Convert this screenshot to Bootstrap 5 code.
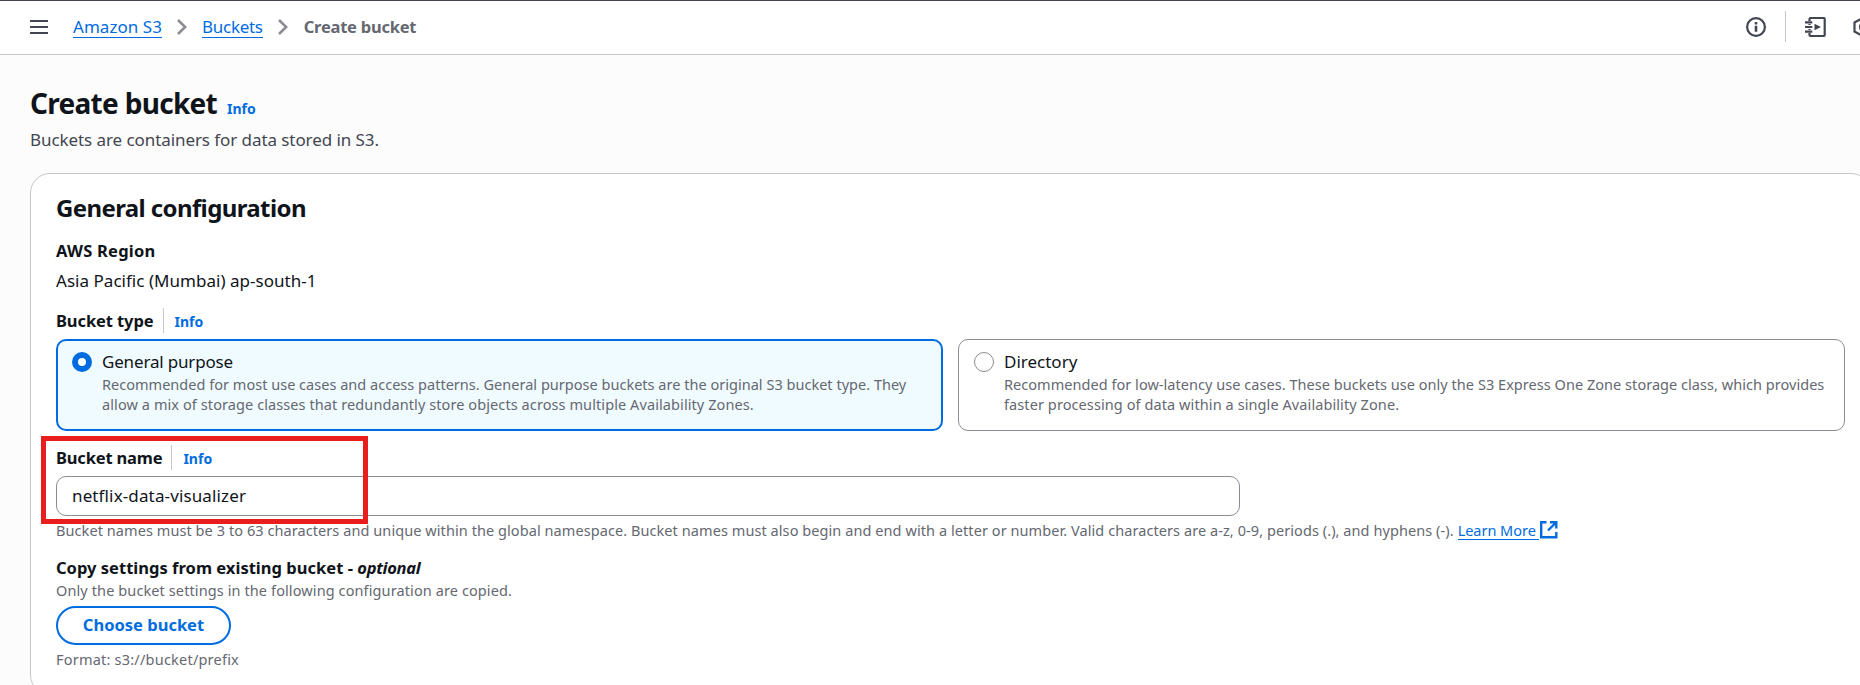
<!DOCTYPE html>
<html lang="en">
<head>
<meta charset="utf-8">
<meta name="viewport" content="width=device-width, initial-scale=1">
<title>Create bucket</title>
<link href="https://cdn.jsdelivr.net/npm/bootstrap@5.3.0/dist/css/bootstrap.min.css" rel="stylesheet">
<style>
:root{--blue:#006ce0;--ink:#0f141a;--muted-ink:#656871;--line:#c6c6cd;--ctl:#8c8c94;--icon:#424650}
body{font-family:"Noto Sans","Open Sans",sans-serif;font-size:17px;line-height:25px;color:var(--ink);background:#fcfcfd;height:685px;overflow:hidden;white-space:nowrap}
a{color:var(--blue);text-decoration:none}
svg{display:block;flex:none}
.topbar{height:55px;border-top:1px solid var(--icon);border-bottom:1px solid var(--line);background:#fff;padding:0 0 2px 30px}
.menu-btn{margin-right:25px}
.crumb-link{line-height:21px;border-bottom:1px solid var(--blue)}
.crumb-s3{letter-spacing:.05px}
.crumb-buckets{letter-spacing:-.28px}
.crumb-here{color:var(--muted-ink);font-size:16.5px;font-weight:700;letter-spacing:-.24px;margin-left:1px}
.chev{margin:0 15px}
.tools{width:114px}
.tools .rule{flex:none;width:1px;height:31px;background:var(--line);margin:0 19px}
.hex-btn{margin-left:27px}
.page{padding:29px 0 0 30px;width:1871px}
.page-title{font-size:28px;line-height:38px;font-weight:700;letter-spacing:-.7px;margin:0 10px 0 0}
.title-row{height:38px}
.info-link{font-size:14px;font-weight:700}
.intro{margin:5px 0 21px;color:#424650;letter-spacing:-.075px}
.panel{background:#fff;border:1px solid var(--line);border-radius:20px;padding:19px 25px 25px;height:522px}
.panel-title{font-size:24px;line-height:30px;font-weight:700;letter-spacing:-.61px;margin:0 0 15px}
.field-label{font-size:16.5px;font-weight:700}
.region-value{margin:5px 0 15px;letter-spacing:.03px}
.label-row{height:25px}
.ls-region{letter-spacing:.23px}
.ls-type{letter-spacing:-.1px}
.ls-name{letter-spacing:-.17px}
.ls-copy{letter-spacing:.02px;margin-top:15px}
.ls-copy em{letter-spacing:-.3px}
.v-rule{width:1px;height:25px;background:var(--line);margin:0 11px 0 9px;align-self:center}
.tiles{--bs-gutter-x:15px;margin-top:6px}
.tile{height:92px;border:1px solid var(--ctl);border-radius:10px;padding:9px 15px}
.tile.chosen{border:2px solid var(--blue);background:#f0fbff;padding:8px 14px}
.dot{width:20px;height:20px;border-radius:50%;border:1px solid var(--ctl);background:#fff;margin:3px 10px 0 0;flex:none}
.chosen .dot{border:6px solid var(--blue)}
.chosen .tile-name{letter-spacing:-.17px}
.hint{font-size:14.5px;line-height:20px;color:var(--muted-ink);letter-spacing:.073px}
.tile .hint{letter-spacing:.04px}
.chosen .hint{letter-spacing:.02px}
.tile .hint span{letter-spacing:.09px}
.ls-only{letter-spacing:.106px}
.ls-format{letter-spacing:.216px}
.name-group{margin-top:14px}
.name-input{width:1184px;height:40px;border:1px solid var(--ctl);border-radius:10px;padding:0 15px 2px;font-size:17px;letter-spacing:.13px;color:var(--ink);box-shadow:none;margin-top:6px}
.learn{letter-spacing:-.03px;margin-left:4px}
.learn span{height:20px;border-bottom:1px solid var(--blue);padding-right:3px}
.choose{width:175px;height:39px;border:2px solid var(--blue);border-radius:20px;color:var(--blue);font-size:16.5px;line-height:25px;font-weight:700;padding:4px 0 6px;margin:6px 0 4px}
.callout-box{position:absolute;left:-15px;top:-9px;width:327px;height:88px;border:5px solid #e81e1e}
</style>
</head>
<body>
<header class="topbar d-flex align-items-center justify-content-between">
  <nav class="d-flex align-items-center">
    <svg class="menu-btn" width="18" height="16" viewBox="0 0 18 16" stroke="#424650" stroke-width="2"><path d="M0 2h18M0 8h18M0 14h18"/></svg>
    <a class="crumb-link crumb-s3" href="#">Amazon S3</a>
    <svg class="chev" width="10" height="16" viewBox="0 0 10 16" fill="none" stroke="#8c8c94" stroke-width="2.6"><path d="M1 1l7.200 7L1 15"/></svg>
    <a class="crumb-link crumb-buckets" href="#">Buckets</a>
    <svg class="chev" width="10" height="16" viewBox="0 0 10 16" fill="none" stroke="#8c8c94" stroke-width="2.6"><path d="M1 1l7.200 7L1 15"/></svg>
    <span class="crumb-here">Create bucket</span>
  </nav>
  <div class="tools d-flex align-items-center">
    <svg width="20" height="20" viewBox="0 0 20 20" fill="none" stroke="#424650" stroke-width="2.200"><circle cx="10" cy="10" r="8.900"/><path d="M10 8.800v6M10 5v2.400" stroke-width="2.600"/></svg>
    <span class="rule"></span>
    <svg width="21" height="20" viewBox="0 0 21 20" fill="none" stroke="#424650" stroke-width="2.200"><path d="M4.500 4V2.200Q4.500 1 5.700 1H18.500q1.200 0 1.200 1.200v15.600q0 1.200-1.200 1.200H5.700Q4.500 19 4.500 17.800V16M4.500 7v1M4.500 12v1M0 5.300h7.300M0 10h7.300M0 14.700h7.300"/><path d="M9.500 6.700v6.600l6.500-3.300z" fill="#424650" stroke="none"/></svg>
    <svg class="hex-btn" width="20" height="20" viewBox="0 0 20 20" fill="none" stroke="#424650" stroke-width="2.200"><path d="M10 1L1.500 5.500v9L10 19l8.500-4.500v-9z"/><circle cx="10" cy="10" r="3"/></svg>
  </div>
</header>
<main class="page">
  <div class="title-row d-flex align-items-baseline"><h1 class="page-title">Create bucket</h1><a class="info-link" href="#">Info</a></div>
  <p class="intro">Buckets are containers for data stored in S3.</p>
  <section class="panel">
    <h2 class="panel-title">General configuration</h2>
    <div class="field-label ls-region">AWS Region</div>
    <div class="region-value">Asia Pacific (Mumbai) ap-south-1</div>
    <div class="label-row d-flex align-items-baseline"><span class="field-label ls-type">Bucket type</span><span class="v-rule"></span><a class="info-link" href="#">Info</a></div>
    <div class="row tiles">
      <div class="col-6"><div class="tile chosen d-flex"><span class="dot"></span><div><div class="tile-name">General purpose</div><div class="hint">Recommended for most use cases and access patterns. General purpose buckets are the original S3 bucket type. They<br><span>allow a mix of storage classes that redundantly store objects across multiple Availability Zones.</span></div></div></div></div>
      <div class="col-6"><div class="tile d-flex"><span class="dot"></span><div><div class="tile-name">Directory</div><div class="hint">Recommended for low-latency use cases. These buckets use only the S3 Express One Zone storage class, which provides<br><span>faster processing of data within a single Availability Zone.</span></div></div></div></div>
    </div>
    <div class="name-group position-relative">
      <div class="label-row d-flex align-items-baseline"><label class="field-label ls-name" for="bucketName">Bucket name</label><span class="v-rule"></span><a class="info-link" href="#">Info</a></div>
      <input class="form-control name-input" id="bucketName" type="text" value="netflix-data-visualizer">
      <div class="callout-box"></div>
    </div>
    <div class="hint d-flex mt-1">Bucket names must be 3 to 63 characters and unique within the global namespace. Bucket names must also begin and end with a letter or number. Valid characters are a-z, 0-9, periods (.), and hyphens (-).
      <a class="learn d-flex" href="#"><span>Learn More</span><svg width="19" height="19" viewBox="0 0 19 19" fill="none" stroke="#006ce0" stroke-width="2.400"><path d="M7.500 2.200H2.200V17.300H17.300V12M11 2.200h6.300V8.500M17 2.500L9 10.500"/></svg></a></div>
    <div class="field-label ls-copy">Copy settings from existing bucket - <em>optional</em></div>
    <div class="hint ls-only">Only the bucket settings in the following configuration are copied.</div>
    <button class="btn choose d-block" type="button">Choose bucket</button>
    <div class="hint ls-format">Format: s3://bucket/prefix</div>
  </section>
</main>
<script src="https://cdn.jsdelivr.net/npm/bootstrap@5.3.0/dist/js/bootstrap.bundle.min.js"></script>
</body>
</html>
